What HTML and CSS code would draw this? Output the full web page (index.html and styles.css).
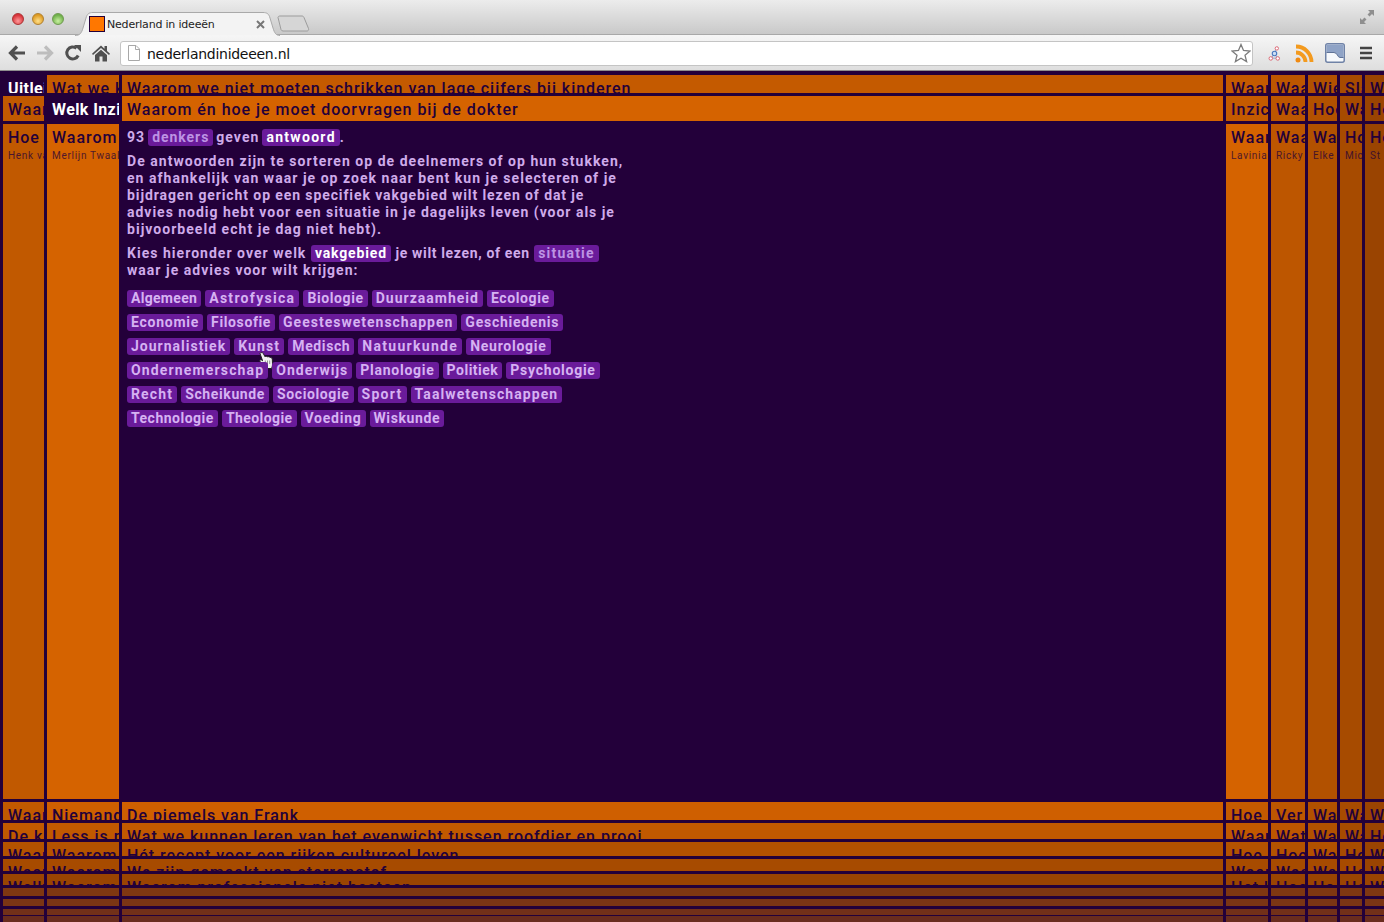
FILE: index.html
```
<!DOCTYPE html>
<html lang="nl">
<head>
<meta charset="utf-8">
<title>Nederland in ideeën</title>
<link rel="stylesheet" href="styles.css">
</head>
<body>
<header class="chrome">
  <div class="titlebar">
    <div class="lights"><i class="light red"></i><i class="light amber"></i><i class="light green"></i></div>
    <div class="tab">
      <svg class="tab-shape" width="205" height="24" viewBox="0 0 205 24"><path d="M0 23.5C5 23.5 6.5 21 8 16L11 6C12 2 14 .5 18 .5H188C192 .5 194 2 195 6L198 16C199.5 21 201 23.5 205 23.5" fill="#f3f3f3" stroke="#a9a9a9"/></svg>
      <span class="favicon"></span>
      <span class="tab-title">Nederland in ideeën</span>
      <svg class="tab-close" width="9" height="9" viewBox="0 0 9 9"><path d="M1 1L8 8M8 1L1 8" stroke="#777" stroke-width="2"/></svg>
    </div>
    <svg class="newtab" width="33" height="17" viewBox="0 0 33 17"><path d="M1 2.5C1 1.5 2 1 3 1H25C26 1 26.5 1.5 27 2.5L31.5 13.5C32 15 31 16 30 16H6C5 16 4.5 15.5 4 14.5Z" fill="#d6d6d6" stroke="#9c9c9c"/></svg>
    <svg class="expand" width="16" height="16" viewBox="0 0 16 16"><path d="M9 1H15V7L13 5L10.5 7.5L8.5 5.5L11 3ZM7 15H1V9L3 11L5.5 8.5L7.5 10.5L5 13Z" fill="#8f8f8f"/></svg>
  </div>
  <div class="toolbar">
    <button class="tool"><svg width="20" height="18" viewBox="0 0 20 18"><path d="M18 9H4M10 2.500L3.500 9L10 15.500" fill="none" stroke="#505050" stroke-width="3.200"/></svg></button>
    <button class="tool"><svg width="20" height="18" viewBox="0 0 20 18"><path d="M2 9H16M10 2.500L16.500 9L10 15.500" fill="none" stroke="#bdbdbd" stroke-width="3.200"/></svg></button>
    <button class="tool"><svg width="18" height="18" viewBox="0 0 18 18"><path d="M14.200 11.500A6 6 0 1 1 12.500 4.200" fill="none" stroke="#505050" stroke-width="3"/><path d="M10 1L17 1V8Z" fill="#505050"/></svg></button>
    <button class="tool"><svg width="18" height="18" viewBox="0 0 18 18"><path d="M9 1.500L12.500 4.700V2H15V7L18 9.700L17 11L9 4L1 11L0 9.700ZM3 11L9 5.800L15 11V17.500H10.500V12.500H7.500V17.500H3Z" fill="#505050"/></svg></button>
    <div class="omnibox">
      <svg class="page" width="12" height="16" viewBox="0 0 12 16"><path d="M.5.5H8L11.5 4V15.500H.5ZM7.500.5V4.500H11.500" fill="#fff" stroke="#a8a8a8"/></svg>
      <span class="url">nederlandinideeen.nl</span>
      <svg class="star" width="20" height="20" viewBox="0 0 20 20"><path d="M10 1.500L12.500 7.500L19 8L14 12.200L15.600 18.600L10 15.200L4.400 18.600L6 12.200L1 8L7.500 7.500Z" fill="#fff" stroke="#7c7c7c" stroke-width="1.300"/></svg>
    </div>
    <div class="ext e1"><svg width="13" height="15" viewBox="0 0 14 16"><path d="M9 3L7 8M7 8L3.500 13M7 8L10 13M3.500 13H10" stroke="#8aa0c8" fill="none"/><circle cx="9.500" cy="2.500" r="1.800" fill="#fff" stroke="#d9606e"/><circle cx="7" cy="8" r="2.400" fill="#cfe0f5" stroke="#4a78c0" stroke-width="1.200"/><circle cx="3" cy="13.300" r="1.900" fill="#fff" stroke="#d9606e"/><circle cx="10.500" cy="13.300" r="1.900" fill="#fff" stroke="#d9606e"/></svg></div>
    <div class="ext e2"><svg width="19" height="19" viewBox="0 0 19 19"><circle cx="3" cy="16" r="2.500" fill="#f08a12"/><path d="M1 8.500A9.500 9.500 0 0 1 10.500 18M1 2.500A15.500 15.500 0 0 1 16.500 18" fill="none" stroke="#f39a1e" stroke-width="3.800"/></svg></div>
    <div class="ext e3"><svg width="20" height="20" viewBox="0 0 20 20"><rect x=".75" y=".75" width="18.500" height="18.500" rx="2" fill="#f6f8fb" stroke="#6f82a6" stroke-width="1.500"/><path d="M1.500 1.500H18.500V14.500H15C12.500 14.500 12.500 9.500 9 9.500H1.500Z" fill="#8fa3c6"/><path d="M1.500 9.500H9C12.500 9.500 12.500 14.500 15 14.500H18.500" fill="none" stroke="#5f7296"/></svg></div>
    <div class="ext e4"><svg width="14" height="14" viewBox="0 0 14 14"><path d="M1 2H13M1 7H13M1 12H13" stroke="#444" stroke-width="2.600"/></svg></div>
  </div>
</header>
<main class="board">
  <div class="cell r1 c1 sel"><h2>Uitleiding</h2></div>
  <div class="cell r1 c2"><h2>Wat we kunnen</h2></div>
  <div class="cell r1 c3"><h2>Waarom we niet moeten schrikken van lage cijfers bij kinderen</h2></div>
  <div class="cell r1 c4"><h2>Waarom</h2></div>
  <div class="cell r1 c5"><h2>Waarom</h2></div>
  <div class="cell r1 c6"><h2>Wie</h2></div>
  <div class="cell r1 c7"><h2>Slaap</h2></div>
  <div class="cell r1 c8"><h2>Wat</h2></div>

  <div class="cell r2 c1"><h2>Waarom</h2></div>
  <div class="cell r2 c2 sel"><h2>Welk Inzicht</h2></div>
  <div class="cell r2 c3"><h2>Waarom én hoe je moet doorvragen bij de dokter</h2></div>
  <div class="cell r2 c4"><h2>Inzicht</h2></div>
  <div class="cell r2 c5"><h2>Waarom</h2></div>
  <div class="cell r2 c6"><h2>Hoe</h2></div>
  <div class="cell r2 c7"><h2>Wat</h2></div>
  <div class="cell r2 c8"><h2>Hoe</h2></div>

  <div class="cell r3 c1"><h2>Hoe we</h2><p class="who">Henk van</p></div>
  <div class="cell r3 c2"><h2>Waarom</h2><p class="who">Merlijn Twaalfhoven</p></div>
  <div class="cell r3 c3 intro">
    <p class="lead">93 <a class="tag dim">denkers</a> geven <a class="tag on">antwoord</a>.</p>
    <p class="copy">De antwoorden zijn te sorteren op de deelnemers of op hun stukken,<br>en afhankelijk van waar je op zoek naar bent kun je selecteren of je<br><span class="snug">bijdragen gericht op een specifiek vakgebied wilt lezen of dat je</span><br><span class="near-snug">advies nodig hebt voor een situatie in je dagelijks leven (voor als je</span><br>bijvoorbeeld echt je dag niet hebt).</p>
    <p class="copy">Kies hieronder over welk <a class="tag on">vakgebied</a> <span class="tight">je wilt lezen, of een</span> <a class="tag dim">situatie</a><br>waar je advies voor wilt krijgen:</p>
    <div class="tags">
      <div class="tagrow"><a class="chip ls3">Algemeen</a><a class="chip ls13">Astrofysica</a><a class="chip ls6">Biologie</a><a class="chip ls10">Duurzaamheid</a><a class="chip ls6">Ecologie</a></div>
      <div class="tagrow"><a class="chip">Economie</a><a class="chip ls6">Filosofie</a><a class="chip ls10">Geesteswetenschappen</a><a class="chip">Geschiedenis</a></div>
      <div class="tagrow"><a class="chip ls10">Journalistiek</a><a class="chip ls12">Kunst<svg class="hand" width="14" height="17" viewBox="0 0 14 17"><path d="M1 1.500C1.500 .3 3.800 .3 4.300 1.500L6 4.800C6.500 4 8 4 8.500 5C9 4.500 10.500 4.600 11 5.500C11.500 5.300 13 5.600 13.300 7L13.500 12C13.500 14 13 15 12.500 16.500H5.500L2.500 11.500L.7 9C.7 7.800 2 7.300 3 8.300L3.600 8.800Z" fill="#f2f2f2" stroke="#222"/><path d="M6.300 8.500V12M8.500 8.500V12M10.700 8.500V12" stroke="#777" stroke-width=".8"/></svg></a><a class="chip ls6">Medisch</a><a class="chip ls13">Natuurkunde</a><a class="chip">Neurologie</a></div>
      <div class="tagrow"><a class="chip ls12">Ondernemerschap</a><a class="chip ls10">Onderwijs</a><a class="chip ls7">Planologie</a><a class="chip ls5">Politiek</a><a class="chip ls7">Psychologie</a></div>
      <div class="tagrow"><a class="chip ls12">Recht</a><a class="chip ls6">Scheikunde</a><a class="chip ls6">Sociologie</a><a class="chip ls13">Sport</a><a class="chip ls11">Taalwetenschappen</a></div>
      <div class="tagrow"><a class="chip ls5">Technologie</a><a class="chip ls4">Theologie</a><a class="chip ls7">Voeding</a><a class="chip ls6">Wiskunde</a></div>
    </div>
  </div>
  <div class="cell r3 c4 near"><h2>Waarom</h2><p class="who">Lavinia Meijer</p></div>
  <div class="cell r3 c5"><h2>Waarom</h2><p class="who">Ricky</p></div>
  <div class="cell r3 c6"><h2>Waarom</h2><p class="who">Elke</p></div>
  <div class="cell r3 c7"><h2>Hoe</h2><p class="who">Mic</p></div>
  <div class="cell r3 c8"><h2>Hoe</h2><p class="who">St</p></div>

  <div class="cell r4 c1"><h2>Waarom</h2></div>
  <div class="cell r4 c2"><h2>Niemand wil</h2></div>
  <div class="cell r4 c3"><h2>De piemels van Frank</h2></div>
  <div class="cell r4 c4"><h2>Hoe we</h2></div>
  <div class="cell r4 c5"><h2>Ver</h2></div>
  <div class="cell r4 c6"><h2>Wat</h2></div>
  <div class="cell r4 c7"><h2>Wat</h2></div>
  <div class="cell r4 c8"><h2>Wat</h2></div>

  <div class="cell r5 c1"><h2>De kunst</h2></div>
  <div class="cell r5 c2"><h2>Less is more</h2></div>
  <div class="cell r5 c3"><h2>Wat we kunnen leren van het evenwicht tussen roofdier en prooi</h2></div>
  <div class="cell r5 c4"><h2>Waarom</h2></div>
  <div class="cell r5 c5"><h2>Wat</h2></div>
  <div class="cell r5 c6"><h2>Wat</h2></div>
  <div class="cell r5 c7"><h2>Wat</h2></div>
  <div class="cell r5 c8"><h2>Hoe</h2></div>

  <div class="cell r6 c1"><h2>Waarom</h2></div>
  <div class="cell r6 c2"><h2>Waarom</h2></div>
  <div class="cell r6 c3"><h2>Hét recept voor een rijken cultureel leven</h2></div>
  <div class="cell r6 c4"><h2>Hoe de</h2></div>
  <div class="cell r6 c5"><h2>Hoe</h2></div>
  <div class="cell r6 c6"><h2>Wat</h2></div>
  <div class="cell r6 c7"><h2>Hoe</h2></div>
  <div class="cell r6 c8"><h2>Wat</h2></div>

  <div class="cell r7 c1"><h2>Waarom</h2></div>
  <div class="cell r7 c2"><h2>Waarom</h2></div>
  <div class="cell r7 c3"><h2>We zijn gemaakt van sterrenstof</h2></div>
  <div class="cell r7 c4"><h2>Waarom</h2></div>
  <div class="cell r7 c5"><h2>Was</h2></div>
  <div class="cell r7 c6"><h2>Wat</h2></div>
  <div class="cell r7 c7"><h2>Hoe</h2></div>
  <div class="cell r7 c8"><h2>Wat</h2></div>

  <div class="cell r8 c1"><h2>Welk</h2></div>
  <div class="cell r8 c2"><h2>Waarom</h2></div>
  <div class="cell r8 c3"><h2>Waarom professionele niet bestaan</h2></div>
  <div class="cell r8 c4"><h2>Het kan</h2></div>
  <div class="cell r8 c5"><h2>Hoe</h2></div>
  <div class="cell r8 c6"><h2>Hoe</h2></div>
  <div class="cell r8 c7"><h2>Hoe</h2></div>
  <div class="cell r8 c8"><h2>Wat</h2></div>

  <div class="cell r9 c1"><h2>Waarom</h2></div>
  <div class="cell r9 c2"><h2>Waarom</h2></div>
  <div class="cell r9 c3"><h2>Waarom we het niet weten</h2></div>
  <div class="cell r9 c4"><h2>Waarom</h2></div>
  <div class="cell r9 c5"><h2>Tot</h2></div>
  <div class="cell r9 c6"><h2>Wat</h2></div>
  <div class="cell r9 c7"><h2>Wat</h2></div>
  <div class="cell r9 c8"><h2>Wat</h2></div>

  <div class="cell r10 c1"></div><div class="cell r10 c2"></div><div class="cell r10 c3"></div><div class="cell r10 c4"></div><div class="cell r10 c5"></div><div class="cell r10 c6"></div><div class="cell r10 c7"></div><div class="cell r10 c8"></div>
  <div class="cell r11 c1"></div><div class="cell r11 c2"></div><div class="cell r11 c3"></div><div class="cell r11 c4"></div><div class="cell r11 c5"></div><div class="cell r11 c6"></div><div class="cell r11 c7"></div><div class="cell r11 c8"></div>
  <div class="cell r12 c1"></div><div class="cell r12 c2"></div><div class="cell r12 c3"></div><div class="cell r12 c4"></div><div class="cell r12 c5"></div><div class="cell r12 c6"></div><div class="cell r12 c7"></div><div class="cell r12 c8"></div>
</main>
</body>
</html>
```
FILE: styles.css
```
* { box-sizing: border-box; }
html, body { margin: 0; height: 100%; }
body { background: #23003a; overflow: hidden; font-family: Roboto, "Liberation Sans", sans-serif; color: #23003a; }

.chrome { height: 71px; }
.titlebar { height: 35px; display: flex; align-items: flex-end; background: linear-gradient(#ececec, #c9c9c9); border-bottom: 1px solid #a8a8a8; }
.lights { display: flex; gap: 8px; padding: 0 0 9px 12px; width: 75px; }
.light { width: 12px; height: 12px; border-radius: 50%; border: 1px solid #8c8c8c; }
.red { background: radial-gradient(circle at 50% 70%, #ff9a9a, #d8333a 70%); border-color: #a33; }
.amber { background: radial-gradient(circle at 50% 70%, #ffe08a, #dd9a22 70%); border-color: #b08030; }
.green { background: radial-gradient(circle at 50% 70%, #c8f0a0, #6fb04a 70%); border-color: #6f9a50; }
.tab { position: relative; z-index: 1; width: 205px; height: 24px; margin-bottom: -2px; display: flex; align-items: center; padding: 0 0 0 14px; }
.tab-shape { position: absolute; left: 0; top: 0; }
.favicon { position: relative; width: 16px; height: 16px; background: #ff7700; border: 1px solid #23003a; }
.tab-title { position: relative; margin-left: 2px; font: 11px "DejaVu Sans", sans-serif; color: #222; white-space: nowrap; letter-spacing: -.2px; }
.tab-close { position: absolute; left: 181px; top: 8px; }
.newtab { margin: 0 0 2px -3px; }
.expand { margin: 0 9px 9px auto; }

.toolbar { height: 36px; display: flex; align-items: center; padding: 1px 0 0 3px; background: linear-gradient(#f6f6f6, #dedede); border-bottom: 1px solid #8e8e8e; }
.tool { width: 28px; height: 28px; padding: 0; border: 0; background: none; display: flex; align-items: center; justify-content: center; }
.omnibox { flex: 1; height: 25px; margin: 0 1px 0 5px; display: flex; align-items: center; padding: 0 1px 0 7px; background: #fff; border: 1px solid #c4c4c4; border-radius: 3px; }
.url { margin: 1px 0 0 7px; font: 14px "DejaVu Sans", sans-serif; letter-spacing: -.28px; color: #111; }
.star { margin-left: auto; }
.ext { display: flex; justify-content: center; align-items: center; }
.e1 { width: 40px; }
.e2 { width: 20px; }
.e3 { width: 42px; }
.e4 { width: 20px; margin-right: 8px; }

.board { height: 851px; display: grid; padding: 4px 0 3px 3px; gap: 3px;
  grid-template-columns: 41px 72px 1101px 42px 34px 29px 22px 19px;
  grid-template-rows: 18px 25px 675px 18px 16px 14px 12px 11px 8px 7px 4px 3px; }

.cell { --a: min(var(--r), var(--c)); overflow: hidden; padding: 6px 0 0 5px; white-space: nowrap;
  background: rgb(calc(35 + 220 * var(--a)) calc(8 + 112 * var(--a)) max(0, calc((.55 - var(--a)) * 130))); }
.cell h2 { margin: 0; font-size: 16px; line-height: 16px; font-weight: 500; letter-spacing: .97px; }
.cell.r9 { padding-top: 7px; }
.who { margin: 4px 0 0; font-size: 10px; line-height: 12px; letter-spacing: .7px; opacity: .75; }

.r1 { --r: .73; } .r2 { --r: .81; } .r3 { --r: .81; } .r4 { --r: .78; } .r5 { --r: .72; } .r6 { --r: .66; }
.r7 { --r: .6; } .r8 { --r: .54; } .r9 { --r: .42; } .r10 { --r: .4; } .r11 { --r: .36; } .r12 { --r: .32; }
.c1 { --c: .72; } .c2 { --c: .81; } .c3 { --c: .81; } .c4 { --c: .73; } .c5 { --c: .7; } .c6 { --c: .65; } .c7 { --c: .6; } .c8 { --c: .54; }
.near { --c: .81; }
.cell.sel, .cell.intro { background: none; }
.cell.sel h2 { color: #fff; font-weight: 700; letter-spacing: .4px; }

.intro { padding: 5px 0 0 5px; color: #cfabea; font-size: 14px; line-height: 17px; font-weight: 700; letter-spacing: 1.03px; }
.intro p { margin: 0; }
.intro .lead { line-height: 16px; word-spacing: -1.5px; }
.intro .copy { margin-top: 7px; }
.snug { letter-spacing: .9px; }
.near-snug { letter-spacing: .98px; }
.tight { letter-spacing: .65px; }
.tag { padding: 0 4px; border-radius: 3px; background: #6a1b9a; display: inline-block; line-height: 17px; }
.dim { color: #bd93e4; letter-spacing: 1.2px; }
.lead .dim { letter-spacing: .95px; }
.on { color: #fff; letter-spacing: 1.3px; }
.copy .on { letter-spacing: .85px; }
.tags { margin-top: 11px; display: flex; flex-direction: column; gap: 7px; color: #d6b2f2; letter-spacing: .75px; }
.tagrow { display: flex; gap: 4px; }
.chip { padding: 0 4px; height: 17px; border-radius: 3px; background: #6a1b9a; position: relative; }
.ls3 { letter-spacing: .3px; }
.ls4 { letter-spacing: .42px; }
.ls5 { letter-spacing: .5px; }
.ls6 { letter-spacing: .62px; }
.ls7 { letter-spacing: .75px; }
.ls10 { letter-spacing: 1px; }
.ls11 { letter-spacing: 1.08px; }
.ls12 { letter-spacing: 1.15px; }
.ls13 { letter-spacing: 1.3px; }
.hand { position: absolute; left: 25px; top: 14px; }
```
